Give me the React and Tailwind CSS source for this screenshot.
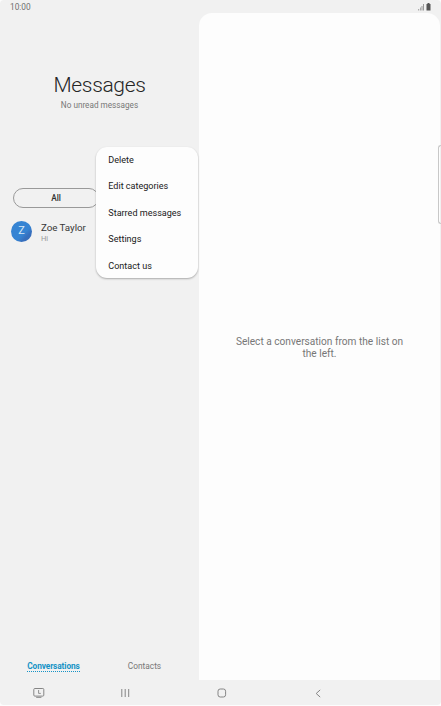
const menuItems = ["Delete", "Edit categories", "Starred messages", "Settings", "Contact us"];

const StatusBar = () => (
  <div className="h-[13px] shrink-0 flex items-center justify-between pl-[10px] pr-[9px] text-[#6f6f6f]">
    <span className="pt-px text-[8.3px] leading-[13px]">10:00</span>
    <svg width="14" height="8" viewBox="0 0 14 8">
      <path d="M0 7.5V6h1.2v1.5zM2 7.5v-3h1v3z" fill="#aaaaaa" />
      <path d="M3.5 7.5V3h1v4.5zM5 7.5V1h1v6.5z" fill="#999999" />
      <path d="M9.5 0h2v1h1v6.5h-4V1h1z" fill="#555555" />
    </svg>
  </div>
);

const OverflowMenu = () => (
  <div className="absolute left-[96px] top-[134px] w-[102px] h-[131px] pt-[0.5px] rounded-[11px] bg-[#fdfdfd] shadow-[0_1px_2px_rgba(0,0,0,0.3)] flex flex-col">
    {menuItems.map((item) => (
      <div key={item} className="h-[26.5px] shrink-0 pl-[12.3px] flex items-center text-[9.05px] text-[#202020] whitespace-nowrap">
        {item}
      </div>
    ))}
  </div>
);

const Sidebar = () => (
  <aside className="relative w-[199px] shrink-0 flex flex-col">
    <header className="pt-[59px] flex flex-col items-center">
      <h1 className="text-[21px] leading-[27px] font-light tracking-[-0.35px] text-[#252525]">Messages</h1>
      <p className="text-[8.2px] leading-[12px] text-[#777777]">No unread messages</p>
    </header>

    <div className="mt-[77px] ml-[13px] w-[86px] h-[20px] rounded-full border border-[#999999] flex items-center justify-center text-[8.3px] font-medium text-[#303030]">
      All
    </div>

    <div className="mt-[13px] pl-[11px] flex items-start">
      <div className="w-[21px] h-[21px] rounded-full bg-linear-to-br from-[#3684d3] from-60% to-[#366ebc] to-75% flex items-center justify-center text-[11px] text-[#d9e8f6]">
        Z
      </div>
      <div className="ml-[9px] pt-px">
        <p className="text-[9.8px] leading-[12px] tracking-[-0.05px] text-[#383838]">Zoe Taylor</p>
        <p className="text-[7.5px] leading-[10px] text-[#999999]">Hi</p>
      </div>
    </div>

    <nav className="mt-auto h-[20px] flex text-[8.3px] leading-[12px]">
      <div className="w-[107px] flex justify-center items-start">
        <span className="h-[12px] border-b border-dotted border-[#1593c6] font-bold tracking-[-0.1px] text-[#1593c6]">Conversations</span>
      </div>
      <div className="w-[75px] flex justify-center text-[#777777]">Contacts</div>
    </nav>

    <OverflowMenu />
  </aside>
);

const NavigationBar = () => (
  <div className="h-[25px] shrink-0 flex items-center pl-[33px] text-[#858585]">
    <svg width="12" height="12" viewBox="0 0 12 12" fill="none" stroke="currentColor">
      <rect x=".8" y="1.5" width="10" height="7.6" rx="1" />
      <path d="M5.6 3v3.4h2.2M3.2 10.4h5.2" strokeWidth=".9" />
    </svg>
    <svg width="9" height="10" viewBox="0 0 9 10" fill="none" stroke="currentColor" className="ml-[76px] mt-px">
      <path d="M.8 1v8M4.2 1v8M7.7 1v8" />
    </svg>
    <svg width="10" height="10" viewBox="0 0 10 10" fill="none" stroke="currentColor" className="ml-[87px] mt-px">
      <rect x="1" y="1" width="7.6" height="8" rx="2.2" />
    </svg>
    <svg width="6" height="9" viewBox="0 0 6 9" fill="none" stroke="currentColor" className="ml-[88px] mt-px">
      <path d="M5.2.9 1.2 4.5l4 3.6" />
    </svg>
  </div>
);

const App = () => (
  <div className="w-[441px] h-[706px] overflow-hidden bg-[#fdfdfd] font-['Roboto',sans-serif]">
    <div className="relative h-[705px] flex flex-col rounded-[4px] bg-[#f1f1f1]">
      <StatusBar />
      <div className="flex-1 flex min-h-0">
        <Sidebar />
        <main className="flex-1 mr-px rounded-t-[13px] bg-[#fdfdfd] pt-[323px]">
          <p className="w-[180px] mx-auto text-center text-[10.15px] leading-[12px] text-[#777777]">
            Select a conversation from the list on the left.
          </p>
        </main>
      </div>
      <NavigationBar />
      {/* edge panel handle */}
      <div className="absolute right-0 top-[145px] w-[3px] h-[79px] rounded-l-[3px] border border-r-0 border-[#c8c8c8]" />
    </div>
  </div>
);

export default App;
